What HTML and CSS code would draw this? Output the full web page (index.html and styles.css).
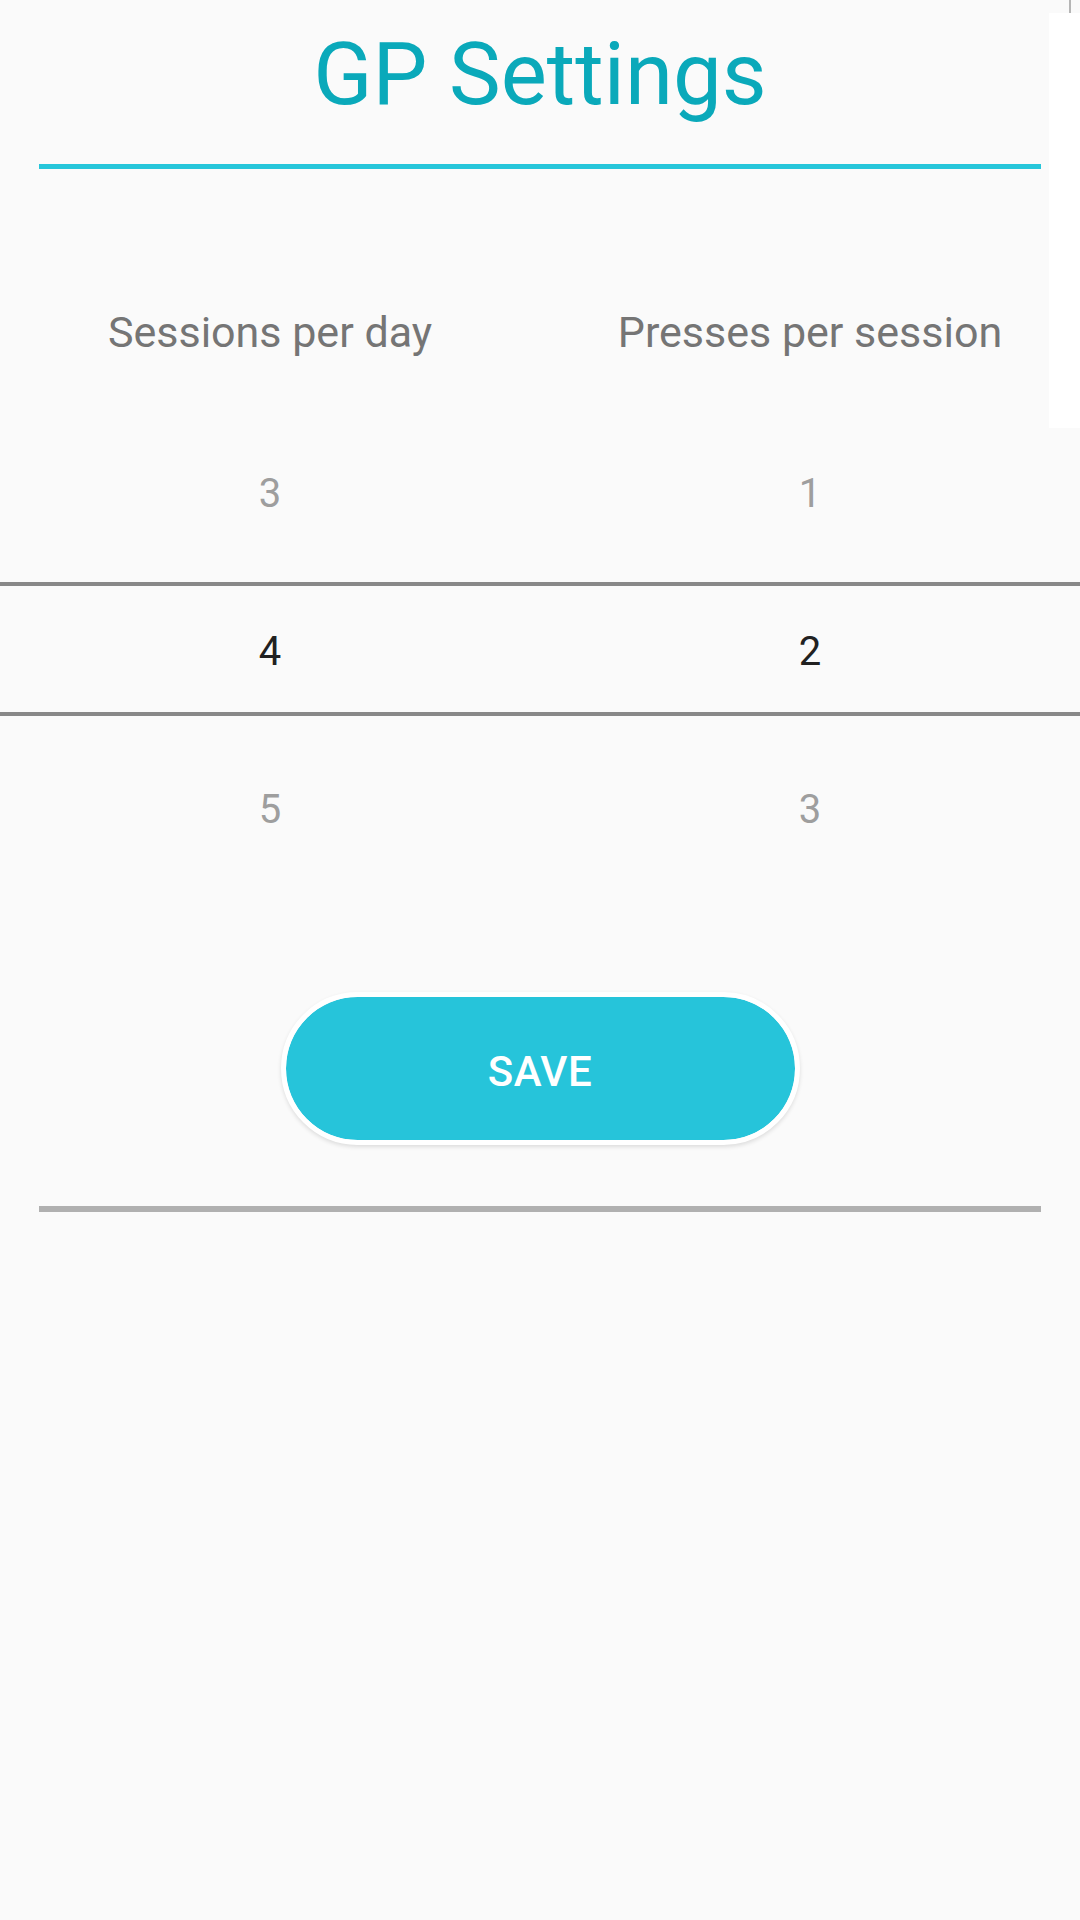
FILE: index.html
```html
<!DOCTYPE html>
<html>
<head>
<meta charset="utf-8">
<link rel="stylesheet" href="styles.css">
</head>
<body>
<div class="page">
  <header class="header">
    <h1 class="title">GP Settings</h1>
  </header>
  <div class="rule-accent"></div>
  <div class="labels">
    <div class="label">Sessions per day</div>
    <div class="label">Presses per session</div>
  </div>
  <div class="picker">
    <div class="row row-edge">
      <span class="num dim">3</span>
      <span class="num dim">1</span>
    </div>
    <div class="divider"></div>
    <div class="row row-mid">
      <span class="num sel">4</span>
      <span class="num sel">2</span>
    </div>
    <div class="divider"></div>
    <div class="row row-edge">
      <span class="num dim">5</span>
      <span class="num dim">3</span>
    </div>
  </div>
  <div class="actions">
    <button class="save">SAVE</button>
  </div>
  <div class="rule-gray"></div>
  <div class="side-panel"></div>
  <div class="side-tick"></div>
</div>
</body>
</html>
```

FILE: styles.css
```css
html, body {
  margin: 0;
  padding: 0;
  background: #fafafa;
}
body {
  width: 1080px;
  height: 1920px;
  font-family: Roboto, "Noto Sans", "Liberation Sans", sans-serif;
  overflow: hidden;
}
.page {
  position: relative;
  display: flex;
  flex-direction: column;
  height: 1920px;
}
.header {
  padding-top: 31px;
  display: flex;
  justify-content: center;
}
.title {
  margin: 0;
  font-size: 87px;
  font-weight: 400;
  line-height: 1;
  color: #0aa9ba;
  letter-spacing: 0;
}
.rule-accent {
  margin: 46px 39px 0 39px;
  height: 5px;
  background: #26c6da;
}
.labels {
  margin-top: 142px;
  display: grid;
  grid-template-columns: 1fr 1fr;
}
.label {
  text-align: center;
  font-size: 43px;
  line-height: 1;
  color: #757575;
}
.picker {
  margin-top: 46px;
  display: flex;
  flex-direction: column;
}
.row {
  display: grid;
  grid-template-columns: 1fr 1fr;
  align-items: center;
}
.row-edge { height: 182px; }
.row-mid { height: 126px; }
.num {
  text-align: center;
  font-size: 40px;
  line-height: 1;
  padding-top: 5px;
}
.dim { color: #9e9e9e; }
.sel { color: #212121; }
.divider {
  height: 4px;
  background: #888888;
}
.actions {
  margin-top: 94px;
  display: flex;
  justify-content: center;
}
.save {
  width: 519px;
  height: 153px;
  border: 5px solid #ffffff;
  border-radius: 80px;
  background: #26c4da;
  background-clip: padding-box;
  color: #ffffff;
  font-family: Roboto, "Noto Sans", "Liberation Sans", sans-serif;
  font-size: 42px;
  font-weight: 500;
  letter-spacing: 0.5px;
  box-shadow: 0 2px 4px rgba(0,0,0,0.12);
  padding: 5px 0 0 0;
}
.rule-gray {
  margin: 61px 39px 0 39px;
  height: 6px;
  background: #b0b0b0;
}
.side-panel {
  position: absolute;
  top: 13px;
  right: 0;
  width: 31px;
  height: 415px;
  background: #ffffff;
}
.side-tick {
  position: absolute;
  top: 0;
  left: 1069px;
  width: 2px;
  height: 13px;
  background: #b5b5b5;
}
```
